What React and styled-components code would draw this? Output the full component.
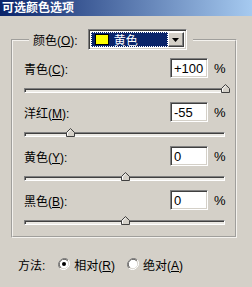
import React from 'react';
import styled, { createGlobalStyle } from 'styled-components';

const GlobalStyle = createGlobalStyle`
  html, body {
    margin: 0;
    padding: 0;
    background: #d4d0c8;
  }
  body {
    font-family: "Liberation Sans", "Noto Sans CJK SC", sans-serif;
    font-size: 12px;
    color: #000;
  }
`;

const Window = styled.div`
  width: 252px;
  height: 287px;
  background: #d4d0c8;
  display: flex;
  flex-direction: column;
  overflow: hidden;
`;

const TitleBar = styled.div`
  height: 16px;
  padding-left: 2px;
  display: flex;
  align-items: center;
  background: linear-gradient(to right, #0a246a, #a6caf0);
  color: #fff;
  font-weight: bold;
  font-size: 12px;
  line-height: 16px;
`;

const GroupBox = styled.fieldset`
  margin: 13px 0 0 11px;
  width: 226px;
  box-sizing: border-box;
  padding: 8px 0 2px 0;
  border: 2px groove #f4f2ee;
  min-inline-size: 0;
`;

const Legend = styled.legend`
  margin-left: 16px;
  padding: 0 6px 0 4px;
  display: flex;
  align-items: center;
  height: 21px;
`;

const Accel = styled.span`
  text-decoration: underline;
`;

const LegendLabel = styled.span`
  margin-right: 10px;
`;

const Select = styled.div`
  width: 99px;
  height: 21px;
  box-sizing: border-box;
  display: flex;
  padding: 2px;
  background: #fff;
  border: 1px solid;
  border-color: #808080 #fff #fff #808080;
  box-shadow: inset 1px 1px #404040, inset -1px -1px #d4d0c8;
`;

const Selected = styled.div`
  flex: 1;
  display: flex;
  align-items: center;
  gap: 5px;
  padding-left: 4px;
  background: #0a246a;
  color: #fff;
  outline: 1px dotted #fff;
  outline-offset: -1px;
`;

const Swatch = styled.span`
  width: 14px;
  height: 11px;
  box-sizing: border-box;
  background: ${p => p.color};
  border: 1px solid #000;
`;

const ArrowButton = styled.div`
  width: 16px;
  display: flex;
  align-items: center;
  justify-content: center;
  background: #d4d0c8;
  border: 1px solid;
  border-color: #fff #404040 #404040 #fff;
  box-shadow: inset -1px -1px #808080;
  box-sizing: border-box;
`;

const Channel = styled.div`
  display: flex;
  flex-direction: column;
  padding-left: 11px;
`;

const Row = styled.div`
  display: flex;
  align-items: center;
  height: 20px;
`;

const Label = styled.span`
  width: 146px;
`;

const NumberBox = styled.div`
  width: 38px;
  height: 20px;
  box-sizing: border-box;
  padding: 0 3px;
  display: flex;
  align-items: center;
  background: #fff;
  border: 1px solid;
  border-color: #808080 #fff #fff #808080;
  box-shadow: inset 1px 1px #404040, inset -1px -1px #d4d0c8;
  font-size: 13px;
`;

const Percent = styled.span`
  margin-left: 6px;
  font-size: 13px;
`;

const SliderArea = styled.div`
  height: 14px;
  margin-top: 10px;
`;

const Track = styled.div`
  position: relative;
  width: 201px;
  height: 5px;
  box-sizing: border-box;
  background: #ebe9e4;
  border: 1px solid;
  border-color: #808080 #fff #fff #808080;
  box-shadow: inset 1px 1px #404040;
`;

const Thumb = styled.svg`
  position: absolute;
  top: -5px;
  width: 9px;
  height: 9px;
`;

const MethodRow = styled.div`
  display: flex;
  align-items: center;
  margin-top: 19px;
  padding-left: 18px;
  height: 14px;
`;

const Radio = styled.label`
  display: flex;
  align-items: center;
  gap: 4px;
  margin-left: ${p => p.gap}px;
`;

const channels = [
  { name: '青色', key: 'C', value: 100, text: '+100' },
  { name: '洋红', key: 'M', value: -55, text: '-55' },
  { name: '黄色', key: 'Y', value: 0, text: '0' },
  { name: '黑色', key: 'B', value: 0, text: '0' },
];

function SliderThumb({ value }) {
  const left = ((value + 100) / 200) * 200 - 4;
  return (
    <Thumb viewBox="0 0 9 9" style={{ left }}>
      <polygon points="4.5,0.5 8.5,4.5 8.5,8.5 0.5,8.5 0.5,4.5" fill="#d4d0c8" stroke="#404040" strokeWidth="1" />
      <polyline points="1.5,7.5 1.5,4.9 4.5,1.9" fill="none" stroke="#fff" strokeWidth="1" />
    </Thumb>
  );
}

function RadioDot({ checked }) {
  return (
    <svg width="12" height="12" viewBox="0 0 12 12">
      <path d="M10.2 1.8 A6 6 0 0 0 1.8 10.2" fill="none" stroke="#808080" strokeWidth="1" />
      <path d="M9.5 2.5 A5 5 0 0 0 2.5 9.5" fill="none" stroke="#404040" strokeWidth="1" />
      <circle cx="6" cy="6" r="4.3" fill="#fff" />
      <path d="M1.8 10.2 A6 6 0 0 0 10.2 1.8" fill="none" stroke="#fff" strokeWidth="1" />
      {checked && <circle cx="6" cy="6" r="2" fill="#000" />}
    </svg>
  );
}

export default function App() {
  return (
    <Window>
      <GlobalStyle />
      <TitleBar>可选颜色选项</TitleBar>
      <GroupBox>
        <Legend>
          <LegendLabel>颜色(<Accel>O</Accel>):</LegendLabel>
          <Select>
            <Selected>
              <Swatch color="#ffff00" />
              <span>黄色</span>
            </Selected>
            <ArrowButton>
              <svg width="7" height="4" viewBox="0 0 7 4">
                <polygon points="0,0 7,0 3.5,4" fill="#000" />
              </svg>
            </ArrowButton>
          </Select>
        </Legend>
        {channels.map(c => (
          <Channel key={c.key}>
            <Row>
              <Label>{c.name}(<Accel>{c.key}</Accel>):</Label>
              <NumberBox>{c.text}</NumberBox>
              <Percent>%</Percent>
            </Row>
            <SliderArea>
              <Track>
                <SliderThumb value={c.value} />
              </Track>
            </SliderArea>
          </Channel>
        ))}
      </GroupBox>
      <MethodRow>
        <span>方法:</span>
        <Radio gap={13}>
          <RadioDot checked />
          <span>相对(<Accel>R</Accel>)</span>
        </Radio>
        <Radio gap={12}>
          <RadioDot />
          <span>绝对(<Accel>A</Accel>)</span>
        </Radio>
      </MethodRow>
    </Window>
  );
}
